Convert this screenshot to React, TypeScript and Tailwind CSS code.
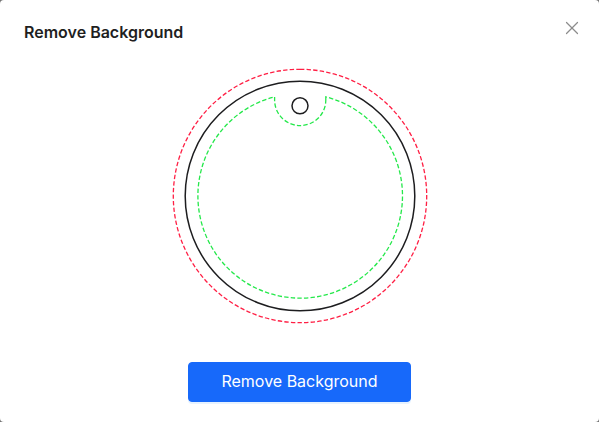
import { X } from "lucide-react";

function KeychainOutline() {
  return (
    <svg viewBox="0 0 256 256" className="w-64" fill="none" role="img" aria-label="Keychain cut lines">
      <circle cx="128" cy="128" r="126.7" stroke="#ff1f44" strokeWidth="1.3" strokeDasharray="4.4 2.2" transform="rotate(-90 128 128)" />
      <circle cx="128" cy="128" r="114.8" stroke="#1d1d1f" strokeWidth="1.5" />
      <path
        d="M153.8 32V28.8A102.3 102.3 0 1 1 102.6 28.8V32A25.6 25.6 0 0 0 153.8 32Z"
        stroke="#24e84a"
        strokeWidth="1.3"
        strokeDasharray="4.4 2.2"
      />
      <circle cx="128" cy="37.8" r="8" stroke="#1d1d1f" strokeWidth="1.5" />
    </svg>
  );
}

export default function App() {
  return (
    <div className="bg-[#737373] font-['Inter',sans-serif]">
      <div role="dialog" aria-labelledby="dialog-title" className="rounded-sm bg-white px-6 py-5 text-base">
        <div className="flex items-start justify-between">
          <h2 id="dialog-title" className="font-semibold text-[#1f1f1f]">Remove Background</h2>
          <button type="button" aria-label="Close" className="-mr-[21px] flex h-4 w-12 items-center justify-center text-[#8c8c8c]">
            <X size={22} strokeWidth={1.3} />
          </button>
        </div>
        <div className="mt-6 flex justify-center">
          <KeychainOutline />
        </div>
        <div className="mt-[38px] flex justify-center">
          <button type="button" className="h-10 rounded-sm border border-[#1769fa] bg-[#1769fa] px-8 pb-0.5 text-white shadow-[0_2px_0_#e6f2ff]">
            Remove Background
          </button>
        </div>
      </div>
    </div>
  );
}
